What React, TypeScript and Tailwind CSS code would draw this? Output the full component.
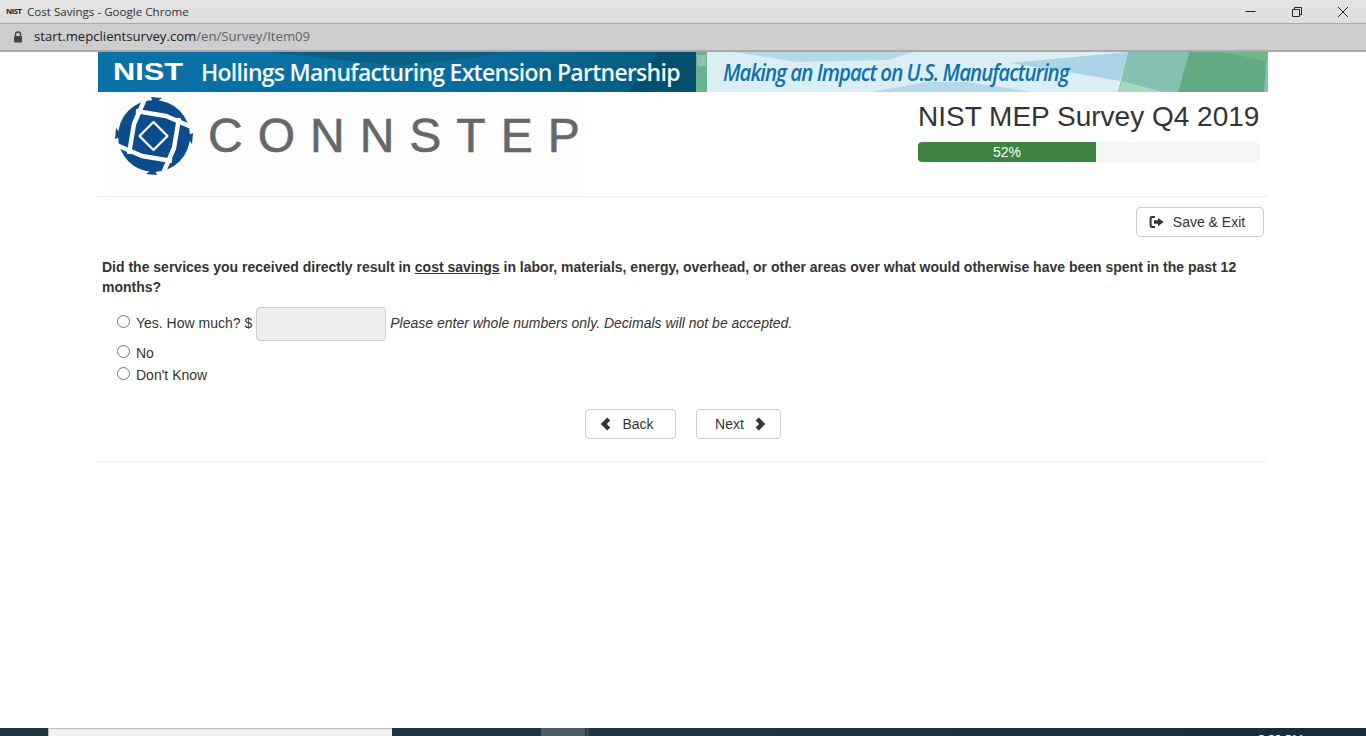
import React from "react";
const sans = "font-['Liberation_Sans',Arial,sans-serif]";
const ui = "font-['Open_Sans','Noto_Sans',sans-serif]";

function Radio({ className = "" }: { className?: string }) {
  return <span className={`block w-[13px] h-[13px] rounded-full border border-[#767676] bg-white shrink-0 ${className}`} />;
}

function Logo() {
  const angles = [0, 90, 180, 270];
  return (
    <svg width="82" height="80" viewBox="0 0 82 80" className="shrink-0">
      <circle cx="40" cy="40" r="36" fill="#0a4c8c" />
      {angles.map((a) => (
        <g key={a} transform={`rotate(${a} 40 40)`}>
          <path d="M37 1 L48 2 L40 8Z" fill="#0a4c8c" />
          <path d="M33 -2 L20 28 L15 58" fill="none" stroke="#fdfdfd" strokeWidth="4.5" strokeLinejoin="round" />
        </g>
      ))}
      <path d="M39.500 26 L53.500 40 L39.500 54 L25.500 40Z" fill="#0a4c8c" stroke="#fdfdfd" strokeWidth="2.200" strokeLinejoin="round" />
    </svg>
  );
}

function Nav({ children, cls }: { children: React.ReactNode; cls: string }) {
  return (
    <button className={`h-[30px] flex items-center justify-center gap-[11px] bg-white border border-[#ccc] rounded text-sm text-[#333] ${cls} ${sans}`}>
      {children}
    </button>
  );
}

export default function App() {
  return (
    <div className={`w-[1366px] h-[736px] overflow-hidden bg-white flex flex-col ${sans}`}>
      {/* Chrome title bar */}
      <div className={`h-6 shrink-0 flex items-center bg-gradient-to-b from-[#e4e4e4] to-[#dcdddd] border-b border-[#a9a9a9] pl-[6px] ${ui}`}>
        <span className="w-[15px] text-[7px] font-bold leading-none text-[#222] inline-block origin-left scale-x-[1.1] tracking-[-0.5px]">NIST</span>
        <span className="ml-[6px] text-[11.6px] pt-px text-[#333]">Cost Savings - Google Chrome</span>
        <div className="ml-auto flex items-center text-[#222]">
          <svg width="12" height="12" viewBox="0 0 12 12" className="mr-[34px]"><path d="M0.5 5.5H10.5" stroke="#222" /></svg>
          <svg width="12" height="12" viewBox="0 0 12 12" className="mr-[34px]"><path d="M1.5 3.5H8.5V10.5H1.5ZM3.5 3.5V1.5H10.5V8.5H8.5" stroke="#222" fill="none" /></svg>
          <svg width="12" height="12" viewBox="0 0 12 12" className="mr-[17px]"><path d="M1 1L11 11M11 1L1 11" stroke="#222" /></svg>
        </div>
      </div>
      {/* URL bar */}
      <div className={`h-[28px] shrink-0 flex items-center bg-[#cdcdcd] border-b-2 border-[#a8a8a8] pl-[13px] ${ui}`}>
        <svg width="10" height="12" viewBox="0 0 10 12"><path d="M2.5 5V3.5a2.5 2.5 0 0 1 5 0V5" stroke="#444" strokeWidth="1.3" fill="none" /><rect x="1" y="5" width="8" height="6.5" rx="1" fill="#444" /></svg>
        <span className="ml-[11px] text-[13.14px] text-[#202124]">start.mepclientsurvey.com<span className="text-[#5f6368]">/en/Survey/Item09</span></span>
      </div>

      <div className="flex-1 flex flex-col w-[1170px] ml-[98px]">
        {/* Banner */}
        <div className="relative h-10 shrink-0 flex overflow-hidden">
          <svg width="1170" height="40" viewBox="0 0 1170 40" className="absolute inset-0">
            <defs>
              <linearGradient id="bn" x1="0" y1="0" x2="1" y2="0">
                <stop offset="0" stopColor="#0a72a8" />
                <stop offset="0.6" stopColor="#0a6c9e" />
                <stop offset="1" stopColor="#03597a" />
              </linearGradient>
            </defs>
            <rect width="598" height="40" fill="url(#bn)" />
            <polygon points="170,0 420,0 300,14" fill="#0a5f87" />
            <polygon points="560,0 598,0 598,40 530,40" fill="#02506d" />
            <rect x="598" width="11" height="40" fill="#6db08e" />
            <rect x="599" y="3" width="9" height="11" fill="#8fc4a8" />
            <rect x="609" width="561" height="40" fill="#dbeef5" />
            <polygon points="635,0 815,0 790,8 700,10" fill="#b5d9e7" />
            <polygon points="772,40 935,40 870,30 830,30" fill="#b5d9e7" />
            <polygon points="912,11 1030,0 1022,29 970,20" fill="#abd3e4" />
            <polygon points="1030,0 1091,0 1080,40 1020,40" fill="#86c0b3" />
            <polygon points="1024,29 1065,40 1020,40" fill="#a8d8bd" />
            <polygon points="1091,0 1170,0 1167,40 1080,40" fill="#62aa82" />
            <polygon points="1125,0 1170,0 1167,9" fill="#72b886" />
            <polygon points="1168,9 1170,9 1170,40 1166,40" fill="#86c0b3" />
          </svg>
          <div className="relative w-[598px] shrink-0 flex items-center pl-[15px]">
            <span className={`w-[88px] inline-block origin-left scale-x-[1.28] text-[24px] font-bold leading-none text-white ${sans}`}>NIST</span>
            <span className="text-[23px] leading-none text-[#f1f7fa] font-['Open_Sans',sans-serif] font-semibold tracking-[-0.73px] whitespace-nowrap">Hollings Manufacturing Extension Partnership</span>
          </div>
          <div className="relative flex-1 flex items-center pl-[27px]">
            <span className="inline-block origin-left scale-x-[0.89] text-[23px] leading-none italic font-semibold text-[#0f71ab] font-['Open_Sans',sans-serif] tracking-[-1.1px] whitespace-nowrap">Making an Impact on U.S. Manufacturing</span>
          </div>
        </div>

        {/* Header */}
        <div className="h-[105px] shrink-0 flex justify-between border-b border-[#eee]">
          <div className="w-[479px] h-[101px] ml-[9px] bg-[#fdfdfd] flex items-start pl-[7px] pt-[4px]">
            <Logo />
            <span className={`ml-[12px] h-[80px] flex items-center text-[48px] leading-none text-[#64686b] tracking-[15px] [-webkit-text-stroke:0.6px_#64686b] whitespace-nowrap ${sans}`}>CONNSTEP</span>
          </div>
          <div className="w-[342px] mr-2 pt-[9px]">
            <h1 className="text-[28px] leading-[31px] text-[#333] whitespace-nowrap">NIST MEP Survey Q4 2019</h1>
            <div className="mt-[10px] h-5 rounded bg-[#f5f5f5] overflow-hidden flex">
              <div className="w-[178px] bg-[#3f8341] text-white text-sm leading-5 text-center">52%</div>
            </div>
          </div>
        </div>

        {/* Save */}
        <div className="flex justify-end mt-[10px] pr-1">
          <button className="w-[128px] h-[30px] pr-[6px] flex items-center justify-center gap-[9px] bg-white border border-[#ccc] rounded text-sm text-[#333]">
            <svg width="15" height="14" viewBox="0 0 15 14" fill="#333"><path d="M6 1H3a2.4 2.4 0 0 0-2.4 2.4v7.2A2.4 2.4 0 0 0 3 13h3v-2H3.4a.8.8 0 0 1-.8-.8V3.8a.8.8 0 0 1 .8-.8H6Z" /><path d="M9 2.8l5.6 4.2L9 11.200V8.800H5V5.200h4Z" /></svg>
            Save &amp; Exit
          </button>
        </div>

        {/* Question */}
        <p className="mt-[20px] px-1 text-sm leading-5 font-bold text-[#333]">
          Did the services you received directly result in <u>cost savings</u> in labor, materials, energy, overhead, or other areas over what would otherwise have been spent in the past 12 months?
        </p>

        <div className="mt-[10px] pl-[19px] text-sm text-[#333]">
          <div className="h-[34px] flex items-center">
            <Radio className="mb-[5px]" />
            <span className="ml-[6px] mb-[2px]">Yes. How much? $</span>
            <span className="ml-[4px] w-[130px] h-[34px] block bg-[#eee] border border-[#ccc] rounded" />
            <span className="ml-[4px] mb-[2px] italic">Please enter whole numbers only. Decimals will not be accepted.</span>
          </div>
          <div className="-mt-[1px] h-[22px] flex items-center"><Radio /><span className="ml-[6px] mt-[3px]">No</span></div>
          <div className="h-[22px] flex items-center"><Radio /><span className="ml-[6px] mt-[3px]">Don't Know</span></div>
        </div>

        {/* Nav */}
        <div className="mt-[25px] flex justify-center gap-5">
          <Nav cls="w-[91px] pr-[7px]">
            <svg width="11" height="14" viewBox="0 0 11 14" fill="#333"><path d="M7.2 0.500 10.300 3.500 6.800 7l3.500 3.500-3.100 3L0.700 7Z" /></svg>
            Back
          </Nav>
          <Nav cls="w-[85px] pl-[4px]">
            Next
            <svg width="11" height="14" viewBox="0 0 11 14" fill="#333"><path d="M3.800 0.500 0.700 3.500 4.200 7l-3.500 3.500 3.100 3L10.300 7Z" /></svg>
          </Nav>
        </div>
        <div className="mt-[22px] border-t border-[#eee]" />
      </div>

      {/* Taskbar */}
      <div className="h-2 shrink-0 flex bg-[#1f3640] overflow-hidden">
        <div className="ml-[48px] w-[344px] bg-[#f0f0f0] border-t border-l border-[#bbb]" />
        <div className="ml-[149px] w-[44px] bg-[#4b5c66]" />
        <div className="ml-[1px] w-[3px] bg-[#35474f]" />
        <div className="flex-1 flex justify-end bg-gradient-to-r from-[#1f3640] to-[#1a2a40]">
          <span className={`mr-[63px] mt-[4px] text-xs leading-4 text-white whitespace-nowrap ${ui}`}>3:33 PM</span>
        </div>
      </div>
    </div>
  );
}
